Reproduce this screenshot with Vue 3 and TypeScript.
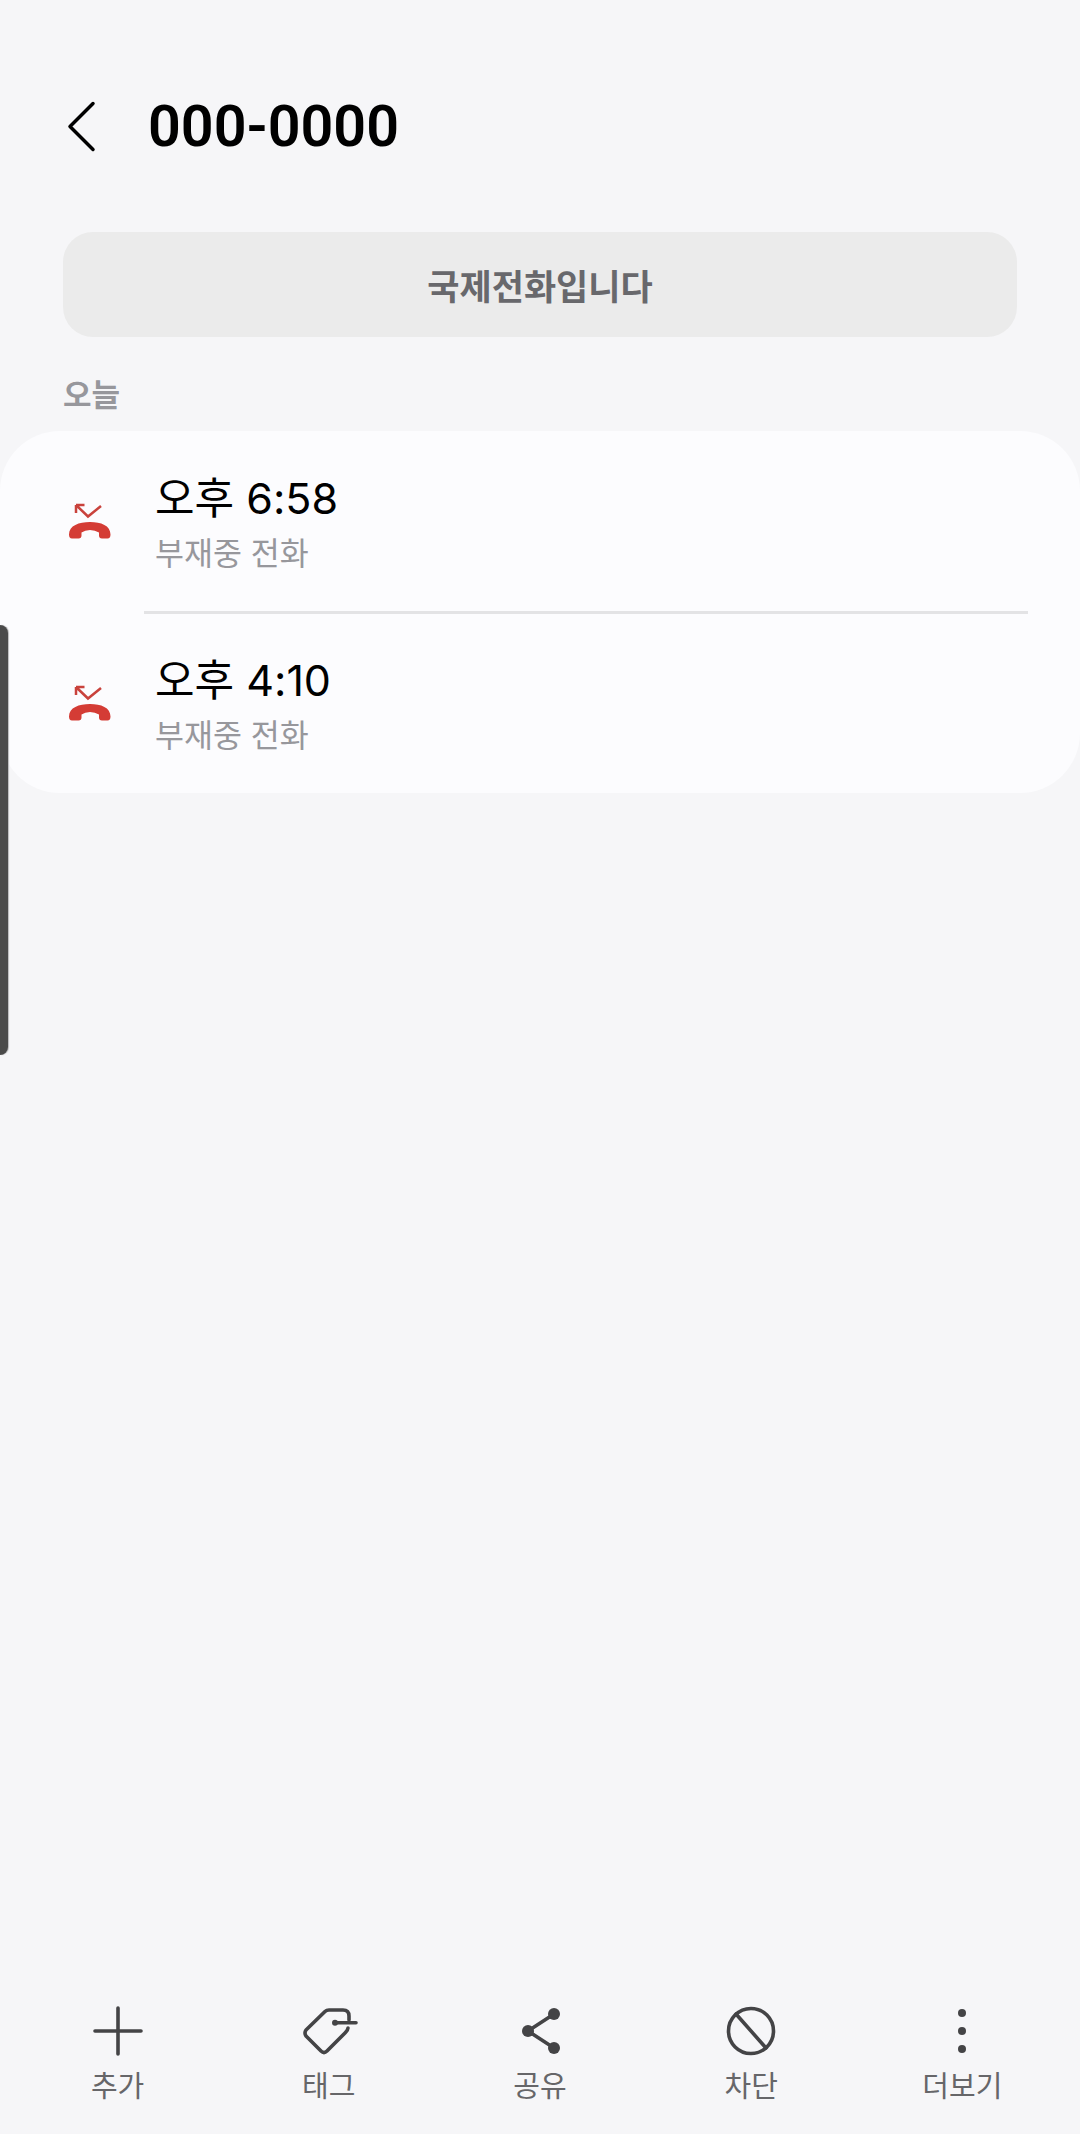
<script setup lang="ts">
interface CallEntry {
  time: string
  kind: string
}

const calls: CallEntry[] = [
  { time: '오후 6:58', kind: '부재중 전화' },
  { time: '오후 4:10', kind: '부재중 전화' }
]
</script>

<template>
  <div class="page">
    <header class="header">
      <svg class="back" viewBox="0 0 40 60" width="40" height="60">
        <path d="M30 6.500 L7 29.500 L30 52.500" />
      </svg>
      <h1 class="title">000-0000</h1>
    </header>

    <div class="notice">국제전화입니다</div>

    <div class="section">오늘</div>

    <ul class="card">
      <li v-for="call in calls" :key="call.time" class="row">
        <svg class="call-icon" viewBox="0 0 48 48" width="48" height="48">
          <path class="arrow" d="M10 7 L22 18.500 L35 8 M10 7 H18.500 M10 7 V15" />
          <path class="handset" d="M3 36.500 C3 27.500 13 24 24 24 C35 24 44.500 27.500 44.500 36.500 Q44.500 40.500 41.500 40.500 L36 40.500 Q33 40.500 33 37.500 L33 34.500 Q29 32 24 32 Q19 32 15.500 34.500 L15.500 37.500 Q15.500 40.500 12.500 40.500 L6 40.500 Q3 40.500 3 36.500 Z" />
        </svg>
        <div class="row-text">
          <div class="time">{{ call.time }}</div>
          <div class="kind">{{ call.kind }}</div>
        </div>
      </li>
    </ul>

    <nav class="toolbar">
      <div class="tool">
        <svg viewBox="0 0 90 70" width="90" height="70">
          <path class="line" d="M45 12 V58 M22 35 H68" />
        </svg>
        <span>추가</span>
      </div>
      <div class="tool">
        <svg viewBox="-6 0 90 70" width="90" height="70">
          <path class="line" d="M59 24 V20 Q59 14 53 14 H39 Q36.500 14 35 15.500 L16 34 Q14 37 16 40 L31 55 Q34 58 37 55 L55 37 Q58 34 58 32" />
          <path class="line" d="M45 26.700 H66" />
          <circle class="dot" cx="45" cy="26.700" r="3" />
        </svg>
        <span>태그</span>
      </div>
      <div class="tool">
        <svg viewBox="0 0 90 70" width="90" height="70">
          <path class="line" d="M59 18 L33 35 L59 52" />
          <circle class="dot" cx="33" cy="35" r="6" />
          <circle class="dot" cx="59" cy="18" r="6" />
          <circle class="dot" cx="59" cy="52" r="6" />
        </svg>
        <span>공유</span>
      </div>
      <div class="tool">
        <svg viewBox="0 0 90 70" width="90" height="70">
          <circle class="line" cx="45" cy="35" r="22.500" />
          <path class="line" d="M30 18 L60 52" />
        </svg>
        <span>차단</span>
      </div>
      <div class="tool">
        <svg viewBox="0 0 90 70" width="90" height="70">
          <circle class="dot" cx="45" cy="17" r="4" />
          <circle class="dot" cx="45" cy="35" r="4" />
          <circle class="dot" cx="45" cy="53" r="4" />
        </svg>
        <span>더보기</span>
      </div>
    </nav>

    <div class="edge-handle"></div>
  </div>
</template>

<style scoped>
.page {
  position: relative;
  display: flex;
  flex-direction: column;
  width: 1080px;
  height: 2134px;
  overflow: hidden;
  background: #f6f6f8;
  font-family: Inter, "Noto Sans CJK KR", sans-serif;
}

.header {
  display: flex;
  align-items: center;
  height: 60px;
  margin-top: 97px;
  padding-left: 63px;
}

.back {
  fill: none;
  stroke: #000;
  stroke-width: 3.500;
  stroke-linecap: round;
  stroke-linejoin: round;
}

.title {
  margin: 0 0 0 45px;
  font-family: Roboto, sans-serif;
  font-size: 57.500px;
  font-weight: 600;
  line-height: 60px;
  color: #000;
}

.notice {
  display: flex;
  align-items: center;
  justify-content: center;
  height: 105px;
  margin: 75px 63px 0;
  border-radius: 30px;
  background: #ebebeb;
  font-size: 35px;
  font-weight: 700;
  color: #68686c;
}

.section {
  margin: 36px 0 0 63px;
  font-size: 31px;
  font-weight: 700;
  line-height: 44px;
  color: #97979c;
}

.card {
  margin: 14px 0 0;
  padding: 0;
  list-style: none;
  border-radius: 60px;
  background: #fcfcfe;
}

.row {
  position: relative;
  display: flex;
  align-items: center;
  box-sizing: border-box;
  height: 181px;
  padding-left: 66px;
}

.row + .row {
  padding-top: 2px;
}

.row + .row::before {
  content: "";
  position: absolute;
  top: -1px;
  left: 144px;
  right: 52px;
  height: 3px;
  background: #e3e3e5;
}

.call-icon {
  flex: none;
}

.arrow {
  fill: none;
  stroke: #c9423c;
  stroke-width: 2.500;
}

.handset {
  fill: #d43c35;
}

.row-text {
  margin: 4px 0 0 41px;
}

.time {
  font-size: 43px;
  line-height: 56px;
  color: #000;
}

.kind {
  margin-top: 5px;
  font-size: 31.500px;
  line-height: 46px;
  color: #97979c;
}

.toolbar {
  display: grid;
  grid-template-columns: repeat(5, 1fr);
  margin-top: auto;
  padding: 0 12px 27px;
}

.tool {
  display: flex;
  flex-direction: column;
  align-items: center;
  font-size: 29px;
  line-height: 40px;
  color: #666669;
}

.tool span {
  margin-top: 1px;
}

.line {
  fill: none;
  stroke: #444446;
  stroke-width: 3.600;
  stroke-linecap: round;
  stroke-linejoin: round;
}

.dot {
  fill: #444446;
}

.edge-handle {
  position: absolute;
  top: 625px;
  left: 0;
  width: 8px;
  height: 430px;
  border-radius: 0 9px 9px 0;
  background: #4a4a4a;
  box-shadow: 1px 0 1px #b9b9bb;
}
</style>
